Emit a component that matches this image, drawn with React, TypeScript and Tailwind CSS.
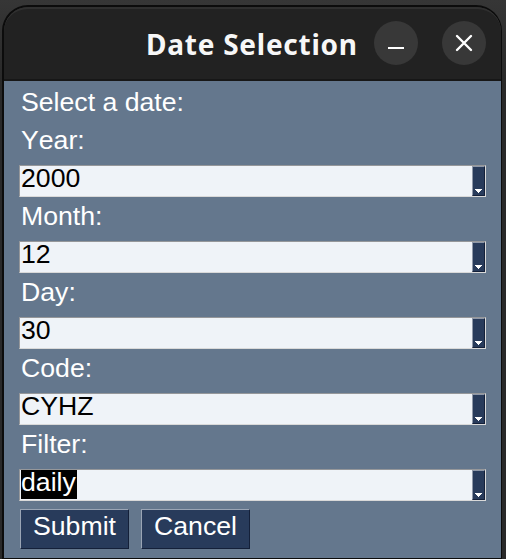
import React from 'react';

type Field = { label: string; value: string; selected?: boolean };

const fields: Field[] = [
  { label: 'Year:', value: '2000' },
  { label: 'Month:', value: '12' },
  { label: 'Day:', value: '30' },
  { label: 'Code:', value: 'CYHZ' },
  { label: 'Filter:', value: 'daily', selected: true },
];

function Label({ children }: { children: React.ReactNode }) {
  return <div className="h-[38px] pl-0.5 leading-[38px] text-white">{children}</div>;
}

function Combo({ value, selected }: { value: string; selected?: boolean }) {
  return (
    <div className="mt-1.5 flex h-8 w-[467px] border border-t-[#95979a] border-r-[#d9d9d9] border-b-[#d9d9d9] border-l-[#95979a] bg-[#eff3f8]">
      <div className="flex-1 pl-px leading-6 text-black">
        <span className={selected ? 'inline-block h-[29px] w-14 bg-black text-white' : ''}>{value}</span>
      </div>
      <div className="flex w-[13px] items-end justify-center border border-t-[#8f98a8] border-r-[#142039] border-b-[#142039] border-l-[#8f98a8] bg-[#283b5b] pb-[2px]">
        <svg width="7" height="4" viewBox="0 0 7 4" shapeRendering="crispEdges">
          <path d="M0 0h7v1H6v1H5v1H4v1H3V3H2V2H1V1H0z" fill="white" />
        </svg>
      </div>
    </div>
  );
}

function DialogButton({ children }: { children: React.ReactNode }) {
  return (
    <button className="h-10 w-[109px] border border-t-[#9aa5b5] border-r-[#142039] border-b-[#142039] border-l-[#9aa5b5] bg-[#283b5b] text-center leading-8 text-white">
      <span className="block h-[38px]">{children}</span>
    </button>
  );
}

export default function App() {
  return (
    <div className="h-[559px] w-[506px] overflow-hidden bg-[#2d2d2d] bg-linear-to-b from-[#363636] via-[#292929] via-15% to-[#292929] pt-[5px] pl-0.5">
      <div className="h-[554px] w-[500px] overflow-hidden rounded-t-[26px] border-t-2 border-r border-b border-l-2 border-[#0c0c0c]">
        <header className="flex h-[74px] items-center rounded-t-[24px] border-t-2 border-b-2 border-t-[#303030] border-b-[#171717] bg-[#222222]">
          <h1 className="ml-[142px] w-[212px] font-['Noto_Sans',sans-serif] text-[28px] leading-9 font-bold tracking-[0.75px] whitespace-nowrap text-[#f7f7f7]">
            Date Selection
          </h1>
          <button className="mt-[-2px] ml-4 flex size-11 items-center justify-center rounded-full bg-[#383838]" aria-label="Minimize">
            <svg width="44" height="44" viewBox="0 0 44 44">
              <path d="M14 26h16v2H14z" fill="white" />
            </svg>
          </button>
          <button className="mt-[-2px] ml-6 flex size-11 items-center justify-center rounded-full bg-[#383838]" aria-label="Close">
            <svg width="44" height="44" viewBox="0 0 44 44" fill="none" stroke="white" strokeWidth="2.4" strokeLinecap="round">
              <path d="M15 15l14 14M29 15L15 29" />
            </svg>
          </button>
        </header>
        <main className="h-[477px] bg-[#64778d] pt-0.5 pl-[15px] font-['Liberation_Sans',Arial,sans-serif] text-[26.67px] [font-kerning:none]">
          <Label>Select a date:</Label>
          {fields.map((f) => (
            <section key={f.label}>
              <Label>{f.label}</Label>
              <Combo value={f.value} selected={f.selected} />
            </section>
          ))}
          <div className="mt-2 ml-px flex gap-3">
            <DialogButton>Submit</DialogButton>
            <DialogButton>Cancel</DialogButton>
          </div>
        </main>
      </div>
    </div>
  );
}
